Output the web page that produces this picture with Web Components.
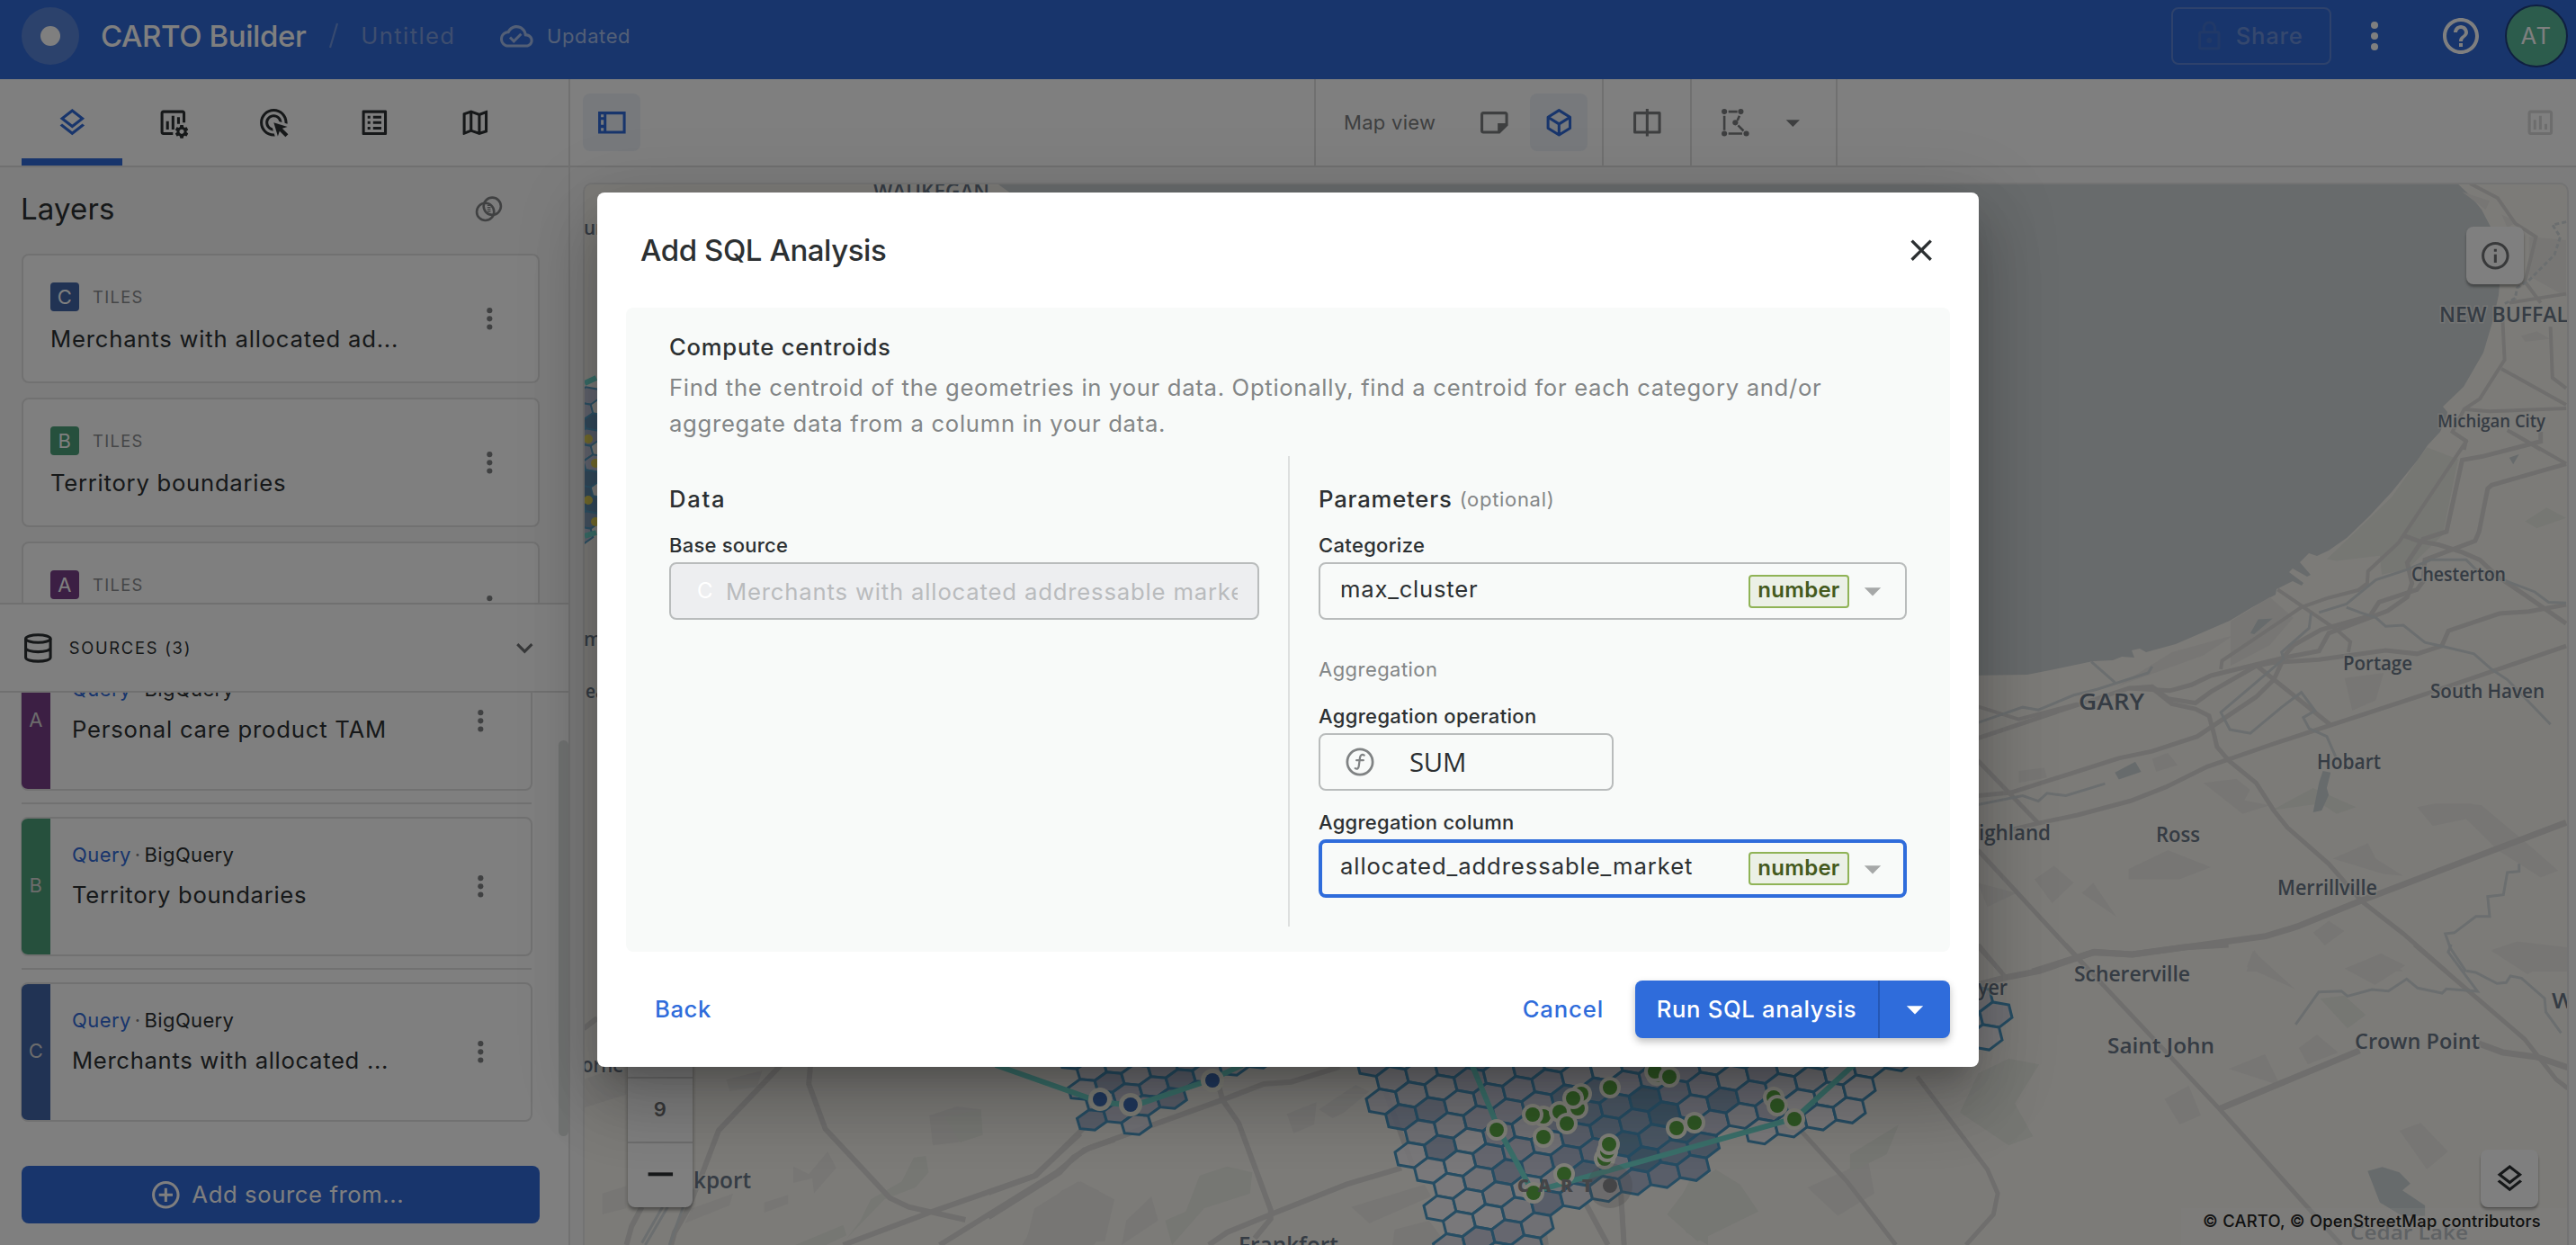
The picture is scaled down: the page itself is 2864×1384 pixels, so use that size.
<!DOCTYPE html>
<html lang="en">
<head>
<meta charset="utf-8">
<title>CARTO Builder</title>
<style>
html,body{margin:0;height:100%;overflow:hidden;background:#fff}
body{font-family:Inter,"Liberation Sans",sans-serif;color:#2c3032}
</style>
</head>
<body>
<builder-app></builder-app>
<script>
const define=(name,html,setup)=>customElements.define(name,class extends HTMLElement{
  connectedCallback(){
    if(this.shadowRoot)return;
    const t=document.createElement('template');
    t.innerHTML='<style>*{box-sizing:border-box}:host{box-sizing:border-box}</style>'+(typeof html==='function'?html(this):html);
    this.attachShadow({mode:'open'}).appendChild(t.content.cloneNode(true));
    if(setup)setup(this,this.shadowRoot);
  }
});

/* Text run: size, weight and ink width (w) decide its tracking. */
const ruler=document.createElement('canvas').getContext('2d');
define('ui-text',el=>{
  const s=+(el.getAttribute('size')||25.67),wt=el.getAttribute('weight')||400,f=el.getAttribute('font')||'Inter',w=+el.getAttribute('w');
  const txt=el.textContent;let ls=.46;
  if(w){ruler.font=`${wt} ${s}px "${f}"`;const m=ruler.measureText(txt);ls=(w-(m.actualBoundingBoxRight+m.actualBoundingBoxLeft))/(txt.length-1);}
  return `<style>:host{display:block;flex:none;white-space:pre;font:${wt} ${s}px/${el.getAttribute('lh')||40}px "${f}","Liberation Sans",sans-serif;letter-spacing:${ls.toFixed(3)}px;${el.hasAttribute('color')?`color:${el.getAttribute('color')}`:''}}</style><slot></slot>`;
});

const ring='M12 2C6.48 2 2 6.48 2 12s4.48 10 10 10 10-4.48 10-10S17.52 2 12 2zm0 18c-4.41 0-8-3.59-8-8s3.59-8 8-8 8 3.59 8 8-3.59 8-8 8z';
const P=d=>`<path d="${d}"/>`;
const gear='M19.43 12.98c.04-.32.07-.64.07-.98s-.03-.66-.07-.98l2.11-1.65c.19-.15.24-.42.12-.64l-2-3.46c-.12-.22-.39-.3-.61-.22l-2.49 1c-.52-.4-1.08-.73-1.69-.98l-.38-2.65C14.46 2.18 14.25 2 14 2h-4c-.25 0-.46.18-.49.42l-.38 2.65c-.61.25-1.17.59-1.69.98l-2.49-1c-.23-.09-.49 0-.61.22l-2 3.46c-.13.22-.07.49.12.64l2.11 1.65c-.04.32-.07.65-.07.98s.03.66.07.98l-2.11 1.65c-.19.15-.24.42-.12.64l2 3.46c.12.22.39.3.61.22l2.49-1c.52.4 1.08.73 1.69.98l.38 2.65c.03.24.24.42.49.42h4c.25 0 .46-.18.49-.42l.38-2.65c.61-.25 1.17-.59 1.69-.98l2.49 1c.23.09.49 0 .61-.22l2-3.46c.12-.22.07-.49-.12-.64l-2.11-1.65zM12 15.5c-1.93 0-3.5-1.57-3.5-3.5s1.57-3.5 3.5-3.5 3.5 1.57 3.5 3.5-1.57 3.5-3.5 3.5z';
const ICONS={
layers:P('M11.99 18.54l-7.37-5.73L3 14.07l9 7 9-7-1.63-1.27-7.38 5.74zM12 16l7.36-5.73L21 9l-9-7-9 7 1.63 1.27L12 16zm0-11.47L17.74 9 12 13.47 6.26 9 12 4.53z'),
widgets:P('M5 3h14c1.1 0 2 .9 2 2v7h-2V5H5v14h7v2H5c-1.1 0-2-.9-2-2V5c0-1.1.9-2 2-2zM7 11h2v6H7zM11 7h2v10h-2zM15 8h2v5h-2z')+`<g transform="translate(12.6 12.8) scale(.48)">${P(gear)}</g>`,
click:P('M11.71 17.99C8.53 17.84 6 15.22 6 12c0-3.31 2.69-6 6-6 3.22 0 5.84 2.53 5.99 5.71l-2.1-.63C15.48 9.31 13.89 8 12 8c-2.21 0-4 1.79-4 4 0 1.89 1.31 3.48 3.08 3.89l.63 2.1zM22 12c0 .3-.01.6-.04.9l-1.97-.59c.01-.1.01-.21.01-.31 0-4.42-3.58-8-8-8s-8 3.58-8 8 3.58 8 8 8c.1 0 .21 0 .31-.01l.59 1.97c-.3.03-.6.04-.9.04-5.52 0-10-4.48-10-10S6.48 2 12 2s10 4.48 10 10zm-3.77 4.26L22 15l-10-3 3 10 1.26-3.77 4.27 4.27 1.98-1.98-4.28-4.26z'),
list:P('M19 5v14H5V5h14m1.1-2H3.9c-.5 0-.9.4-.9.9v16.2c0 .4.4.9.9.9h16.2c.4 0 .9-.5.9-.9V3.9c0-.5-.5-.9-.9-.9zM11 7h6v2h-6V7zm0 4h6v2h-6v-2zm0 4h6v2h-6zM7 7h2v2H7zm0 4h2v2H7zm0 4h2v2H7z'),
map:P('M20.5 3l-.16.03L15 5.1 9 3 3.36 4.9c-.21.07-.36.25-.36.48V20.5c0 .28.22.5.5.5l.16-.03L9 18.9l6 2.1 5.64-1.9c.21-.07.36-.25.36-.48V3.5c0-.28-.22-.5-.5-.5zM10 5.47l4 1.4v11.66l-4-1.4V5.47zm-5 .99l3-1.01v11.7l-3 1.16V6.46zm14 11.08l-3 1.01V6.86l3-1.16v11.84z'),
panel:'<path fill-rule="evenodd" d="M2 4h20v16H2zM8 6v12h12V6zM4 6v2h2V6zM4 10v3.6h2V10zM4 15.8V18h2v-2.2z"/>',
note:P('M20 4H4c-1.1 0-2 .9-2 2v12c0 1.1.9 2 2 2h12l6-6V6c0-1.1-.9-2-2-2zM20 12.500h-5.500V18H4V6h16z'),
cube:'<path fill="none" stroke="currentColor" stroke-width="2" stroke-linejoin="round" d="M12 3L4 8v8l8 5 8-5V8zM4 8l8 5 8-5M12 13v8"/>',
compare:'<path fill="none" stroke="currentColor" stroke-width="2" stroke-linejoin="round" d="M3 5h18v14H3zM12 2v20"/>',
poly:'<g fill="none" stroke="currentColor" stroke-width="1.700"><path d="M4 7v10.500M7 4h6.500M7 20h10M15 7l-1.500 3.500M14 14l4 4"/></g><circle cx="4" cy="4" r="2"/><circle cx="16" cy="4" r="2"/><circle cx="12" cy="12" r="2"/><circle cx="4" cy="20" r="2"/><circle cx="20" cy="20" r="2"/>',
caret:P('M7 10l5 5 5-5z'),
chart:P('M19 3H5c-1.1 0-2 .9-2 2v14c0 1.1.9 2 2 2h14c1.1 0 2-.9 2-2V5c0-1.1-.9-2-2-2zm0 16H5V5h14v14zM7 10h2v7H7v-7zm4-3h2v10h-2V7zm4 6h2v4h-2v-4z'),
cloud:P('M19.35 10.04C18.67 6.59 15.64 4 12 4 9.11 4 6.6 5.64 5.35 8.04 2.34 8.36 0 10.91 0 14c0 3.31 2.69 6 6 6h13c2.76 0 5-2.24 5-5 0-2.64-2.05-4.78-4.65-4.96zM19 18H6c-2.21 0-4-1.79-4-4 0-2.05 1.53-3.76 3.56-3.97l1.07-.11.5-.95C8.08 7.14 9.94 6 12 6c2.62 0 4.88 1.86 5.39 4.43l.3 1.5 1.53.11c1.56.1 2.78 1.41 2.78 2.96 0 1.65-1.35 3-3 3zm-9-3.82l-2.09-2.09L6.5 13.5 10 17l6.01-6.01-1.41-1.41z'),
lock:P('M18 8h-1V6c0-2.76-2.24-5-5-5S7 3.24 7 6v2H6c-1.1 0-2 .9-2 2v10c0 1.1.9 2 2 2h12c1.1 0 2-.9 2-2V10c0-1.1-.9-2-2-2zM9 6c0-1.66 1.34-3 3-3s3 1.34 3 3v2H9V6zm9 14H6V10h12v10zm-6-3c1.1 0 2-.9 2-2s-.9-2-2-2-2 .9-2 2 .9 2 2 2z'),
help:P(ring)+P('M11 18h2v-2h-2v2zM12 6c-2.21 0-4 1.79-4 4h2c0-1.1.9-2 2-2s2 .9 2 2c0 2-3 1.75-3 5h2c0-2.25 3-2.500 3-5 0-2.210-1.790-4-4-4z'),
info:P(ring)+P('M11 7h2v2h-2zM11 11h2v6h-2z'),
add:P(ring)+P('M13 7h-2v4H7v2h4v4h2v-4h4v-2h-4z'),
dots:'<circle cx="12" cy="6" r="2"/><circle cx="12" cy="12" r="2"/><circle cx="12" cy="18" r="2"/>',
close:P('M19 6.41L17.59 5 12 10.59 6.41 5 5 6.41 10.59 12 5 17.59 6.41 19 12 13.41 17.59 19 19 17.59 13.41 12z'),
blend:'<g fill="none" stroke="currentColor" stroke-width="1.700"><circle cx="9.600" cy="14" r="6.300"/><circle cx="14.600" cy="10" r="6.300"/></g><path fill="none" stroke="currentColor" stroke-width="2.400" stroke-dasharray=".8 .7" d="M12.200 9v6.500"/>',
db:'<g fill="none" stroke="currentColor" stroke-width="2"><ellipse cx="12" cy="5.200" rx="9" ry="2.800"/><path d="M3 5v14c0 1.500 4 2.700 9 2.700s9-1.200 9-2.700V5M3 12c0 1.600 4 2.800 9 2.800s9-1.200 9-2.800"/></g>',
down:P('M7.41 8.59L12 13.17l4.59-4.580L18 10l-6 6-6-6z'),
minus:P('M3 10.700h18v2.600H3z'),
func:'<circle cx="12" cy="12" r="7.700" fill="none" stroke="currentColor" stroke-width="1.500"/><path fill="none" stroke="currentColor" stroke-width="1.200" stroke-linecap="round" d="M14.600 8c-1.300-1-2.400-.1-2.600 1.400l-.7 5.200c-.2 1.500-1.100 2-2.200 1.300M9.900 11h4.200"/>'
};
define('ui-icon',el=>{const s=el.getAttribute('size')||36.67;return `<style>:host{display:block;flex:none;width:${s}px;height:${s}px;${el.hasAttribute('color')?'color:'+el.getAttribute('color'):''}}svg{display:block;width:100%;height:100%;fill:currentColor}</style><svg viewBox="0 0 24 24">${ICONS[el.getAttribute('name')]}</svg>`;});

define('app-header',`<style>
:host{display:flex;height:88px;flex:none;background:#316ad8;color:#fff;align-items:center;padding:0 9px 8px 24px}
.logo{width:64px;height:64px;border-radius:50%;background:#5984d8;display:flex;align-items:center;justify-content:center}
.logo i{width:22px;height:22px;border-radius:50%;background:#fff}
.share{margin-left:auto;width:178px;height:64px;border:2px solid #5c85d8;border-radius:8px;display:flex;align-items:center;padding-left:22px;color:#6a90dd}
.av{width:70px;height:70px;border-radius:50%;background:#58b898;border:2px solid #1e3f80;display:flex;align-items:center;justify-content:center}
</style>
<div class="logo"><i></i></div>
<ui-text size="33" weight="500" w="228" style="margin-left:24px">CARTO Builder</ui-text>
<svg width="12" height="30" style="margin-left:25px"><path d="M10 1L2 28" stroke="#6f95e0" stroke-width="2.200"/></svg>
<ui-text w="100" color="#7d9dde" style="margin-left:24px">Untitled</ui-text>
<ui-icon name="cloud" color="#a6bfec" style="margin-left:50px"></ui-icon>
<ui-text size="22" w="90" color="#a6bfec" style="margin-left:15px">Updated</ui-text>
<div class="share"><ui-icon name="lock" color="#4273d0"></ui-icon><ui-text w="72" weight="500" style="margin-left:11px">Share</ui-text></div>
<ui-icon name="dots" size="48" style="margin-left:24px"></ui-icon>
<ui-icon name="help" size="48" style="margin-left:48px"></ui-icon>
<div class="av" style="margin-left:25px"><ui-text w="33">AT</ui-text></div>`);

define('layer-card',el=>`<style>
:host{display:flex;flex:none;height:144px;border:2px solid #e2e2e2;border-radius:8px;background:#fff;align-items:center;padding:0 35px 0 30px;justify-content:space-between;color:#2c3032}
.r{display:flex;align-items:center;gap:15px;height:32px;margin:1px 0 11px}
.c{width:32px;height:32px;border-radius:4px;background:${el.getAttribute('tint')};display:flex;align-items:center;justify-content:center;color:#fff}
.b{height:110px;padding-top:14px}
</style><div class="b"><div class="r"><div class="c"><ui-text size="22">${el.getAttribute('letter')}</ui-text></div><ui-text size="18.33" w="54.500" color="#8a8c8e">TILES</ui-text></div><slot></slot></div><ui-icon name="dots" color="#808384"></ui-icon>`);

define('source-card',el=>`<style>
:host{display:flex;flex:none;height:155px;border:2px solid #e2e2e2;border-radius:8px;background:#fff;align-items:stretch;overflow:hidden;border-left-width:1px}
.s{width:32px;background:${el.getAttribute('tint')};display:flex;align-items:center;justify-content:center;color:#d8d8d8;padding-bottom:4px}
.b{flex:1;padding:25px 0 0 24px}
.q{display:flex;margin-bottom:10px}
ui-icon{align-self:center;margin-right:37px}
</style><div class="s"><ui-text size="22">${el.getAttribute('letter')}</ui-text></div><div class="b"><div class="q"><ui-text size="22" lh="30" w="64" color="#316ad8">Query</ui-text><ui-text size="22" lh="30" color="#808080" style="margin-left:4px">·</ui-text><ui-text size="22" lh="30" w="98" style="margin-left:4px">BigQuery</ui-text></div><slot></slot></div><ui-icon name="dots" color="#808384"></ui-icon>`);

define('side-panel',`<style>
:host{display:flex;flex-direction:column;width:634px;flex:none;border-right:2px solid #e2e2e2;background:#f8f8f8;min-height:0}
.tabs{display:flex;height:98px;flex:none;border-bottom:2px solid #e0e0e0;padding-left:24px;background:#fff}
.tab{width:112px;display:flex;align-items:center;justify-content:center;border-bottom:8px solid transparent;padding-top:8px}
.tab.on{border-color:#316ad8;color:#316ad8}
.h{height:96px;flex:none;display:flex;align-items:center;justify-content:space-between;padding:0 70px 4px 23px}
.layers{height:388px;flex:none;overflow:hidden;padding:0 32px 0 24px;display:flex;flex-direction:column;gap:16px}
.sources{flex:1;min-height:0;background:#fff;display:flex;flex-direction:column;border-top:2px solid #e0e0e0;position:relative}
.sh{height:98px;flex:none;border-bottom:2px solid #e0e0e0;display:flex;align-items:center;padding:0 30px 0 24px}
.list{height:502px;flex:none;overflow:hidden;padding:0 40px 0 23px}
.list source-card:first-child{margin-top:-46px}
hr{border:0;height:2px;background:#e2e2e2;margin:13px 1px 14px}
.btn{margin:24px 32px 0 24px;height:64px;flex:none;border-radius:8px;background:#316ad8;color:#fff;display:flex;align-items:center;justify-content:center;padding-right:9px}
.sb{position:absolute;right:0;top:151px;width:11px;height:440px;border-radius:6px;background:#e0e4e3}
</style>
<div class="tabs"><div class="tab on"><ui-icon name="layers"></ui-icon></div><div class="tab"><ui-icon name="widgets"></ui-icon></div><div class="tab"><ui-icon name="click"></ui-icon></div><div class="tab"><ui-icon name="list"></ui-icon></div><div class="tab"><ui-icon name="map"></ui-icon></div></div>
<div class="h"><ui-text size="33" w="101">Layers</ui-text><ui-icon name="blend" color="#808384"></ui-icon></div>
<div class="layers">
<layer-card letter="C" tint="#4366a8"><ui-text w="383">Merchants with allocated ad...</ui-text></layer-card>
<layer-card letter="B" tint="#4ca17a"><ui-text w="260">Territory boundaries</ui-text></layer-card>
<layer-card letter="A" tint="#783e88"><span></span></layer-card></div>
<div class="sources"><div class="sh"><ui-icon name="db"></ui-icon><ui-text size="18.33" w="132" style="margin-left:16px;flex:1">SOURCES (3)</ui-text><ui-icon name="down" color="#707274"></ui-icon></div>
<div class="list"><source-card letter="A" tint="#783e88"><ui-text w="345">Personal care product TAM</ui-text></source-card><hr>
<source-card letter="B" tint="#4ca17a"><ui-text w="259">Territory boundaries</ui-text></source-card><hr>
<source-card letter="C" tint="#4366a8"><ui-text w="348">Merchants with allocated ...</ui-text></source-card></div>
<div class="btn"><ui-icon name="add"></ui-icon><ui-text w="234" style="margin-left:11px">Add source from...</ui-text></div><div class="sb"></div></div>`);

define('map-toolbar',`<style>
:host{display:flex;height:98px;flex:none;border-bottom:2px solid #e0e0e0;background:#fff;align-items:stretch;color:#7c7f80}
.g{display:flex;align-items:center;border-left:2px solid #e0e0e0;flex:none}
.k{width:64px;height:64px;border-radius:8px;display:flex;align-items:center;justify-content:center}
.on{background:#eef3f9;color:#316ad8}
</style>
<div class="g" style="border:0;width:827px;padding-left:14px"><div class="k on"><ui-icon name="panel"></ui-icon></div></div>
<div class="g" style="width:320px"><ui-text size="22" w="101" style="margin-left:31px">Map view</ui-text><div class="k" style="margin-left:33px"><ui-icon name="note"></ui-icon></div><div class="k on" style="margin-left:8px"><ui-icon name="cube"></ui-icon></div></div>
<div class="g" style="width:98px;justify-content:center"><ui-icon name="compare"></ui-icon></div>
<div class="g" style="width:162px;padding-left:30px"><ui-icon name="poly"></ui-icon><ui-icon name="caret" style="margin-left:27px"></ui-icon></div>
<div class="g" style="flex:1;justify-content:flex-end;padding-right:21px;color:#dadada"><ui-icon name="chart"></ui-icon></div>`);

const inPoly=(x,y,p)=>{let c=false;for(let i=0,j=p.length-1;i<p.length;j=i++){const[a,b]=p[i],[d,e]=p[j];if((b>y)!==(e>y)&&x<(d-a)*(y-b)/(e-b)+a)c=!c;}return c;};
const pts=s=>s.trim().split(' ').map(q=>q.split(',').map(Number));
function hexes(poly,o,A,C,shade){
  const B=[A[0]+C[0],A[1]+C[1]],v=[[A[0]+B[0],A[1]+B[1]],[B[0]+C[0],B[1]+C[1]],[C[0]-A[0],C[1]-A[1]]].map(q=>q.map(n=>n/3));
  const ring=[...v,...v.map(q=>[-q[0],-q[1]])];let out='';
  for(let i=-40;i<50;i++)for(let j=-40;j<50;j++){
    const x=o[0]+i*A[0]+j*C[0],y=o[1]+i*A[1]+j*C[1];
    if(!inPoly(x,y,poly))continue;
    const r=Math.abs(Math.sin(i*12.9898+j*78.233)*43758.5453)%1;
    out+=`<path fill="${shade(x,y,r)}" d="M${ring.map(q=>(x+q[0]).toFixed(1)+' '+(y+q[1]).toFixed(1)).join('L')}Z"/>`;
  }
  return out;
}
const tone=['#f2f0f4','#dcdce8','#c4c8dc','#a6b2ce','#86a2c2','#5f8eb4'];
const mainHex=hexes(pts('1518,1150 1522,1200 1535,1225 1545,1245 1552,1262 1560,1285 1572,1310 1592,1330 1598,1348 1604,1362 1610,1400 1700,1400 1722,1368 1728,1340 1755,1338 1790,1332 1830,1316 1890,1300 1912,1290 1912,1262 1950,1264 2010,1250 2060,1236 2085,1225 2088,1203 2130,1193 2160,1180 2225,1168 2240,1158 2234,1140 2222,1118 2205,1105 2100,1110'),[1570,1284],[32.5,-7.8],[-11,25],(x,y,r)=>{
  const d=Math.hypot((x-1830)/100,(y-1255)/70);
  const k=d<.55?4+r*2:d<1?2.6+r*2.4:x>2000?r*1.5:x<1640&&y>1290?r*1.3:.6+r*2.9;
  return tone[Math.min(5,Math.floor(k))];});
const leftHex=hexes(pts('1195,1150 1193,1203 1192,1224 1205,1232 1194,1250 1200,1262 1250,1254 1308,1238 1320,1228 1316,1208 1340,1199 1380,1198 1430,1184 1440,1150'),[1205,1211],[29.6,-8],[-9.8,21],(x,y,r)=>x>1380?tone[5]:tone[Math.min(4,Math.floor(1+r*3))]);
const edgeHex=hexes(pts('640,424 664,430 668,596 640,596'),[655,440],[24,-5],[-8,17],(x,y,r)=>tone[2+Math.floor(r*4)]);
const G=(l)=>l.map(([x,y])=>`<circle cx="${x}" cy="${y}" r="12" fill="#fffef0"/><circle cx="${x}" cy="${y}" r="8" fill="#5fae46"/>`).join('');
const L=(t,x,y,w,s=24,f='#6b7888')=>`<text x="${x}" y="${y}" font-size="${s}" textLength="${w}" lengthAdjust="spacingAndGlyphs" fill="${f}">${t}</text>`;

define('map-canvas',`<style>
:host{display:block;flex:1;min-height:0;margin:17px 8px 0 14px;border:2px solid #e6e6e6;border-bottom:0;border-radius:10px 10px 0 0;overflow:hidden;position:relative;background:#f9f7f1}
svg.m{display:block;width:2204px;height:1181px;overflow:hidden}
.m g.r{fill:none;stroke:#deddda}.m g.r path,.m g.w path{vector-effect:non-scaling-stroke}
.m g.w{fill:none;stroke:#d6dcde;stroke-width:3}
.m g.p{fill:#efede9}.m g.v{fill:#eceee6}
text{font-family:"Open Sans","Noto Sans",sans-serif;font-weight:650;paint-order:stroke;stroke:#f9f7f1;stroke-opacity:.6;stroke-width:3px}
.b{position:absolute;width:64px;height:64px;border-radius:8px;background:#fff;box-shadow:0 3px 3px rgba(0,0,0,.35);display:flex;align-items:center;justify-content:center}
.z{position:absolute;left:48px;bottom:42px;width:72px;height:200px;border-radius:8px;background:#fff;box-shadow:0 3px 4px rgba(0,0,0,.4);display:flex;flex-direction:column;justify-content:flex-end}
.z div{height:72px;border-top:2px solid #dcdcdc;display:flex;align-items:center;justify-content:center;padding-bottom:2px}
.a{position:absolute;right:0;bottom:0;background:rgba(255,255,255,.28);padding:0 29px 0 24px;height:41px}
</style>
<svg class="m" viewBox="651 205 2204 1181">
<path fill="#d0d6d8" d="M1104 200H2729L2747 217 2760 233 2770 252 2777 285 2780 317 2779 328 2773 355 2762 392 2740 430 2717 452 2722 458 2721 464 2714 480 2700 495 2690 510 2660 547 2635 574 2610 598 2590 612 2577 618 2568 615 2558 625 2570 639 2566 641 2550 632 2546 636 2562 648 2560 651 2550 646 2532 655 2531 661 2505 675 2480 690 2450 703 2420 716 2387 725 2380 721 2371 723 2374 731 2360 730 2350 734 2328 735 2290 743 2255 750 2190 751 1800 700Z"/>
<g transform="translate(2180 480) scale(.4363 .3827)">
<g class="p"><path d="M620 1020L705 1008 740 1040 725 1070 790 1085 720 1110ZM430 1270L530 1215 640 1265 560 1300 430 1300ZM950 1240L1040 1195 1060 1240 1130 1290 1080 1285ZM900 1455L940 1420 980 1450 930 1492ZM980 715L1080 700 1060 780 1000 810ZM1165 1090L1210 1080 1300 1080 1330 1085 1460 1210 1525 1275 1480 1295 1370 1215 1290 1125 1205 1145ZM190 1300L240 1260 290 1310 235 1370ZM310 1340L340 1310 400 1410ZM45 1310L145 1340 70 1380ZM150 985L215 975 222 1005 150 1020ZM490 950L530 932 555 968 500 988ZM690 550L790 480 850 540 790 620 690 680ZM540 640L700 590 620 650 400 740ZM980 1560L1075 1515 1130 1568ZM730 1568L750 1505 790 1568ZM1355 1505L1420 1480 1568 1500 1568 1568 1440 1568Z"/></g>
<g class="v"><path d="M935 370L1100 190 1190 45 1270 80 1230 300 1140 400 1075 415 1070 360 960 375ZM1440 260L1495 220 1545 250 1470 280ZM810 1090L900 1035 1010 1090 960 1110 920 1080 790 1100Z"/></g>
<path fill="#cfd7d9" d="M395 990L447 958 462 988 405 1010ZM740 585L760 545 797 542 750 588ZM925 985L945 990 935 1035 940 1055 922 1100 900 1105 915 1020ZM1400 75L1425 65 1410 95Z"/>
<g class="r" stroke-width="5"><path d="M46 1057L130 1048 405 948 490 928 605 885 755 770 800 720 828 650 850 620 920 575 1045 535 1068 495 1165 458 1180 435 1185 372 1313 317 1323 290 1345 165 1355 155 1545 93"/><path d="M135 1155L200 1137 300 1113 435 1072 525 1032 630 973 790 910 945 852 1200 757 1545 622"/><path d="M46 890L250 812 430 745 490 740 530 775 600 788 640 755 755 680 800 670 915 662 1085 635 1165 645 1228 622 1245 578 1375 528 1450 522 1545 502"/><path d="M430 745L535 752 590 735 640 708 830 655 915 637 940 585 1090 520 1140 480 1152 440 1140 380 1180 312 1240 290 1280 82 1330 72 1480 28 1480 0"/><path d="M490 745L540 790 600 805 635 825 648 880 655 915 685 955 755 1020 800 1100 835 1150 940 1255 1022 1362 1130 1458 1240 1568"/><path d="M1128 300L1170 318 1220 328 1280 350 1325 372 1370 420 1435 470 1545 557"/><path d="M46 955L200 1137M46 1215L325 1560M46 1495L105 1568M755 678L945 852"/></g>
<g class="r" stroke-width="7"><path d="M185 1568L340 1512 440 1518 780 1465 860 1437 1022 1362 1545 1135"/></g>
<g class="r" stroke-width="4"><path d="M665 690L668 665 870 510 940 482 1015 460 1038 440 1040 405 1118 322 1290 28 1255 0M810 458L960 575 995 610 990 640M46 798L150 835 300 790M1403 0L1545 93"/></g>
<g class="w"><path d="M46 845L160 800 200 808 290 765 350 748 480 700 490 682M335 668L395 728M895 525L890 570 820 640 825 660 665 815 688 865 740 876 820 800 870 757 905 810 875 830 890 862 935 885 958 945M46 1083L160 1057 200 1073 222 1050 270 1057 370 1022M1225 622L1310 645 1355 690 1395 720 1505 850M985 510L1020 525 1060 540 1085 565 1130 562 1185 612 1225 622M915 525L985 500 1060 430 1140 400 1200 372 1290 372 1315 400 1465 465 1500 495 1545 497M1425 1255L1425 1277 1395 1280 1385 1345 1345 1350 1350 1408 1315 1408 1260 1455 1237 1458 1250 1500 1290 1568"/></g></g>
<g transform="translate(2180 0) scale(.4363 .3333)">
<g class="p"><path d="M1280 640L1350 670 1340 700ZM1380 715L1420 740 1395 760ZM1450 790L1545 800 1545 990 1450 920ZM1430 1120L1470 1105 1505 1130 1440 1140Z"/></g>
<g class="r" stroke-width="4"><path d="M1300 612L1370 660 1415 745 1468 790 1440 940 1480 1010M1382 1040L1388 1200 1325 1330 1285 1365 1255 1440 1290 1470 1285 1500M1380 1230L1545 1350M1285 1365L1350 1372 1545 1362M1400 1010L1545 980M1505 1090L1510 1260 1545 1295M1395 1435L1480 1500"/></g>
<g class="w"><path stroke-dasharray="5 3" d="M1545 740L1510 750 1530 790 1515 850 1450 935 1420 960 1415 995 1385 1015"/></g></g>
<g transform="translate(1800 1050) scale(.6786 .3333)">
<g class="p"><path d="M1040 20L1110 150 1030 75ZM1190 80L1250 30 1290 70 1240 135ZM1000 415L1060 365 1085 470ZM1115 345L1145 300 1180 360 1130 400ZM895 515L935 470 955 570 920 600ZM1280 620L1315 595 1360 690 1325 750ZM310 810L410 720 420 830 360 905ZM1430 20L1500 0 1550 30 1490 100Z"/></g>
<g class="v"><path d="M590 430L640 380 690 400 650 530 680 640 640 670 560 560ZM110 820L160 750 200 800 230 890 130 990 80 900ZM380 700L460 600 440 700 380 760ZM1150 180L1190 170 1225 235 1195 280Z"/></g>
<path fill="#cfd7d9" d="M1228 755L1252 742 1280 760 1298 797 1285 820 1322 870 1322 905 1285 905 1248 860Z"/>
<g class="r" stroke-width="7"><path d="M560 150L635 110 690 88 780 25 842 33 930 8 1000 0M985 548L1215 353M1410 330L1450 360 1505 375 1556 410"/></g>
<g class="r" stroke-width="5"><path d="M590 0L635 110M733 0L790 125 985 548 1185 1002M1305 0L1485 315 1537 450 1556 480M490 440L605 750 622 830 615 900 570 1002M290 600L375 790 455 1002M5 830L10 1002"/></g>
<g class="w"><path d="M1110 267L1148 158 1185 155 1195 172 1235 150 1262 155 1292 115 1310 145 1350 162 1357 148 1408 156 1360 25 1365 0M1390 88L1405 93 1440 130 1455 127 1462 105 1480 112 1518 180 1520 225 1545 295"/></g></g>
<g transform="translate(640 1080) scale(.3827 .3333)">
<g class="p"><path d="M440 360L545 330 530 385 450 400ZM635 650L680 675 735 600 760 655 695 740 690 690 635 705ZM550 770L620 745 620 775 550 805ZM1030 480L1110 450 1180 460 1185 545 1110 570 1040 580ZM1415 730L1470 700 1568 760 1540 900 1300 912 1360 790ZM26 360L150 310 150 410 26 455ZM80 740L150 715 150 790 80 810ZM340 790L460 740 450 780 320 840Z"/></g>
<g class="v"><path d="M1075 485L1180 460 1185 545 1120 570ZM985 620L1020 615 1028 670 990 720 900 760 790 890 830 830 860 760 950 700ZM640 912L780 845 790 880 730 912Z"/></g>
<g class="r" stroke-width="6"><path d="M600 310L418 530 375 660 330 790 290 870 280 912M685 310L680 375 728 525 915 755 970 785 1135 828M780 912L1035 802 1340 680 1480 520M1060 912L1400 670 1480 595 1568 560M195 785L165 850 150 912M26 190L66 155"/></g>
<g class="w"><path d="M255 785L195 905M270 785L205 912M315 785L275 912"/></g></g>
<g transform="translate(1100 1170) scale(.5102 .3333)">
<g class="p"><path d="M650 205L715 165 710 240 665 270ZM720 190L800 108 830 130 775 200 750 220ZM100 520L195 430 240 460 260 560 230 642 80 642ZM790 515L950 440 965 480 830 570ZM885 590L960 560 1000 642 880 642ZM300 560L355 480 370 560 290 642Z"/></g>
<g class="v"><path d="M460 410L520 380 575 400 570 470 470 520 400 642 385 560 430 530ZM1500 510L1530 420 1568 400 1568 642 1520 600Z"/></g>
<g class="r" stroke-width="6"><path d="M0 468L100 412 200 270M0 550L155 400 185 350 220 318 510 158 600 105 660 98 765 48M500 100L510 158 545 235 615 525 615 555 580 620M480 642L520 600 615 540 780 440 900 385M865 130L925 380M1300 500L1350 642M1378 470L1385 642M1210 590L1215 642"/></g></g>
<g stroke="#4d9ac6" stroke-width="3" fill-opacity=".85">${mainHex}${leftHex}</g><g stroke="#5aa4cc" stroke-width="2" fill-opacity=".95">${edgeHex}</g>
<path fill="none" stroke="#74ded4" stroke-width="6" d="M1108 1184L1224 1225 1262 1229 1348 1200 1382 1184M1636 1180L1668 1257 1705 1325 1997 1243 2066 1180M651 426L664 420M651 596L664 592"/>
<g fill="#fffef0"><circle cx="1224" cy="1222" r="13"/><circle cx="1258" cy="1228" r="13"/><circle cx="1349" cy="1201" r="13"/></g><g fill="#4272bc"><circle cx="1224" cy="1222" r="8"/><circle cx="1258" cy="1228" r="8"/><circle cx="1349" cy="1201" r="8"/></g>
${G([[1665,1256],[1717,1241],[1705,1239],[1735,1236],[1755,1232],[1759,1216],[1750,1221],[1791,1209],[1743,1249],[1717,1264],[1785,1288],[1788,1280],[1790,1272],[1740,1305],[1706,1326],[1843,1195],[1841,1191],[1857,1197],[1865,1254],[1885,1248],[1973,1220],[1977,1229],[1996,1244]])}
<g fill="#e8d85a"><circle cx="655" cy="488" r="5"/><circle cx="663" cy="515" r="5"/><circle cx="655" cy="556" r="5"/><circle cx="663" cy="580" r="5"/></g>
<circle cx="1791" cy="1318" r="25" fill="#888" fill-opacity=".25"/>
<g>${['C','A','R','T'].map((c,i)=>`<text x="${[1688,1711,1736,1760][i]}" y="1325" font-size="20" style="font-weight:800;stroke:none" fill="#8a8a8e">${c}</text>`).join('')}</g><circle cx="1791" cy="1318" r="8" fill="#8a8a8e"/>
${L('GARY',2312,788.5,73,25)}${L('ighland',2201,934,80)}${L('Ross',2398,936,49)}${L('Merrillville',2533,995,111)}${L('Hobart',2577,855,71)}${L('Portage',2606,744.5,77,22)}${L('South Haven',2703,776,127,22)}${L('Chesterton',2682,646,105,22)}${L('Schererville',2307,1090.5,129)}${L('Saint John',2344,1170.5,119)}${L('Crown Point',2619,1166,139)}${L('yer',2200,1106,33)}${L('W',2838,1121,25)}${L('Cedar Lake',2614,1378,131,22,'#a6adb4')}${L('NEW BUFFAL',2713,357.5,143,23)}${L('Michigan City',2711,475,120,20)}${L('WAUKEGAN',972,220.5,129,23)}${L('ur',650,261,22,22)}${L('m',650,718,20,22)}${L('ea',652,776,22,22)}${L('orne',648,1192,46)}${L('kport',772,1321,64,25)}${L('Frankfort',1378,1393,111,25)}
</svg>
<div class="b" style="right:48px;top:47px"><ui-icon name="info" color="#707274"></ui-icon></div>
<div class="b" style="right:32px;bottom:42px"><ui-icon name="layers"></ui-icon></div>
<div class="z"><div style="height:55px;border:0"></div><div><ui-text size="22" weight="600" color="#707274">9</ui-text></div><div style="height:73px"><ui-icon name="minus"></ui-icon></div></div>
<div class="a"><ui-text size="18.33" w="375" weight="500" lh="28" color="#222">© CARTO, © OpenStreetMap contributors</ui-text></div>`);

define('type-badge',`<style>:host{display:flex;align-items:center;justify-content:center;width:112px;height:37px;border:2px solid #8fb356;border-radius:4px;background:#ebf0e6;color:#455a1d;flex:none;padding-bottom:2px}</style><ui-text size="24" weight="600" lh="32" w="90.500">number</ui-text>`);

define('form-field',el=>`<style>
:host{display:block}
.box{display:flex;align-items:center;height:64px;border:2px solid #b9bcbc;border-radius:8px;padding:0 14px 0 22px;margin-top:4px}
:host([focused]) .box{border:4px solid #2f6cdb;height:65px;padding:0 12px 0 20px}
:host([disabled]) .box{background:#edeef0;color:#b9bbbd;padding:0 22px 0 29px}
</style><ui-text size="22" lh="30" weight="450" w="${el.getAttribute('lw')}">${el.getAttribute('label')}</ui-text><div class="box"><slot></slot></div>`);

define('analysis-dialog',`<style>
:host{display:flex;flex-direction:column;width:1536px;height:972px;background:#fff;border-radius:8px;box-shadow:0 20px 28px -13px rgba(0,0,0,.2),0 44px 70px 6px rgba(0,0,0,.14),0 17px 84px 15px rgba(0,0,0,.12);color:#2c3032}
header{height:128px;display:flex;align-items:center;justify-content:space-between;padding:0 44px 0 48px}
main{height:716px;flex:none;margin:0 32px;background:#f8faf9;border-radius:8px;padding:24px 48px 0 48px}
.cols{display:flex;height:523px;margin-top:16px}
.l{width:690px;flex:none;border-right:2px solid #dddfdf;padding:28px 32px 0 0}.r{flex:1;padding:28px 0 0 32px}
.t{display:flex;gap:8px;margin-bottom:16px}
footer{height:128px;display:flex;align-items:center;padding:0 32px 0 64px;color:#2f6cdb}
.btn{display:flex;width:350px;height:64px;border-radius:8px;background:#2f6cdb;color:#fff;box-shadow:0 4px 8px rgba(0,0,0,.25);margin-left:35px;align-items:stretch}
.btn div{display:flex;align-items:center;justify-content:center}
.v{flex:1;padding-bottom:5px}
.clip{flex:1;overflow:hidden;margin-left:14px;padding-top:2px}
</style>
<header><ui-text size="33" w="273" weight="450">Add SQL Analysis</ui-text><ui-icon name="close" size="40.300"></ui-icon></header>
<main><ui-text weight="500" w="244">Compute centroids</ui-text>
<ui-text w="1279" color="#838687" style="margin-top:5px">Find the centroid of the geometries in your data. Optionally, find a centroid for each category and/or</ui-text><ui-text w="549" color="#838687">aggregate data from a column in your data.</ui-text>
<div class="cols"><div class="l"><div class="t"><ui-text weight="500" w="58">Data</ui-text></div>
<form-field disabled label="Base source" lw="130"><ui-text size="24" color="#fff">C</ui-text><div class="clip"><ui-text w="583">Merchants with allocated addressable market</ui-text></div></form-field></div>
<div class="r"><div class="t"><ui-text weight="500" w="145">Parameters</ui-text><ui-text size="22" w="101" color="#838687">(optional)</ui-text></div>
<form-field label="Categorize" lw="116"><ui-text w="152" class="v">max_cluster</ui-text><type-badge></type-badge><ui-icon name="caret" size="44" color="#a6a8a8" style="margin-left:4px"></ui-icon></form-field>
<ui-text size="22" lh="30" w="131" color="#838687" style="margin:40px 0 22px">Aggregation</ui-text>
<form-field label="Aggregation operation" lw="241" style="width:328px"><ui-icon name="func" size="44" color="#808384"></ui-icon><ui-text size="29.33" font="Open Sans" w="60" style="margin-left:33px">SUM</ui-text></form-field>
<form-field focused label="Aggregation column" lw="216" style="margin-top:20px"><ui-text w="390" class="v">allocated_addressable_market</ui-text><type-badge></type-badge><ui-icon name="caret" size="44" color="#a6a8a8" style="margin-left:4px"></ui-icon></form-field>
</div></div></main>
<footer><ui-text weight="450" w="61">Back</ui-text><ui-text weight="450" w="87" style="margin-left:auto">Cancel</ui-text>
<div class="btn"><div style="width:270px"><ui-text weight="500" w="219">Run SQL analysis</ui-text></div><div style="flex:1;border-left:2px solid #2557b4"><ui-icon name="caret" size="44"></ui-icon></div></div></footer>`);

define('builder-app',`<style>
:host{display:flex;flex-direction:column;width:2864px;height:1384px;overflow:hidden}
.body{display:flex;flex:1;min-height:0}
.main{flex:1;display:flex;flex-direction:column;min-width:0;background:#f8f8f8}
.backdrop{position:absolute;inset:0;width:2864px;height:1384px;background:rgba(0,0,0,.5);display:flex;align-items:center;justify-content:center;padding-top:16px;overflow:hidden}
</style><app-header></app-header><div class="body"><side-panel></side-panel><div class="main"><map-toolbar></map-toolbar><map-canvas></map-canvas></div></div>
<div class="backdrop"><analysis-dialog></analysis-dialog></div>`);
</script>
</body>
</html>
